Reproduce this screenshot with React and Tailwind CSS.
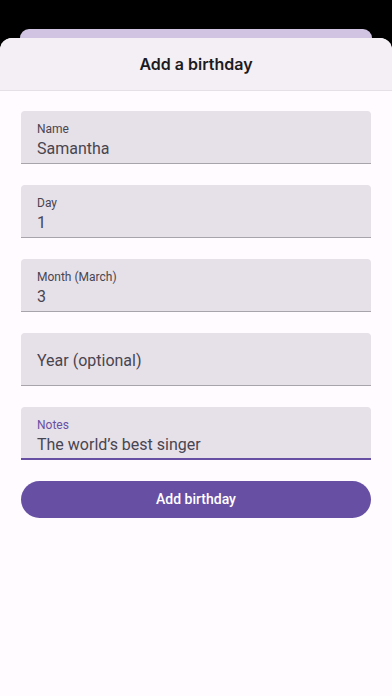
export default function App() {
  const font = { fontFamily: "Roboto, 'Noto Sans', sans-serif" };
  const Field = ({ label, value, focused, placeholder }) => (
    <div
      className={`h-[53px] rounded-t-[4px] bg-[#e6e0e9] px-4 flex flex-col justify-center ${
        focused ? "border-b-2 border-[#6750a4]" : "border-b border-[#a8a4ab]"
      }`}
    >
      {placeholder ? (
        <div className="text-[16px] text-[#49454f] leading-6 pt-[4px]">{placeholder}</div>
      ) : (
        <div className="pt-[8px]">
          <div className={`text-[12px] leading-4 ${focused ? "text-[#6750a4]" : "text-[#49454f]"}`}>{label}</div>
          <div className="text-[16px] leading-6 text-[#49454f]">{value}</div>
        </div>
      )}
    </div>
  );
  return (
    <div className="w-[392px] h-[696px] bg-black flex flex-col overflow-hidden" style={font}>
      <div className="h-[29px] shrink-0" />
      <div className="mx-[20px] h-[9px] shrink-0 rounded-t-[10px] bg-[#d1c4e3]" />
      <div className="flex-1 flex flex-col rounded-t-[12px] overflow-hidden bg-[#fffbfe]">
        <div className="h-[53px] shrink-0 bg-[#f3eff4] border-b border-[#e4e0e6] flex items-center justify-center">
          <span className="text-[16px] font-semibold text-[#1c1b1f]" style={{ fontFamily: "Inter, sans-serif" }}>
            Add a birthday
          </span>
        </div>
        <div className="px-[21px] pt-[20px] flex flex-col gap-[21px]">
          <Field label="Name" value="Samantha" />
          <Field label="Day" value="1" />
          <Field label="Month (March)" value="3" />
          <Field placeholder="Year (optional)" />
          <Field label="Notes" value="The world’s best singer" focused />
          <button className="h-[37px] rounded-full bg-[#6750a4] text-white text-[14px] font-medium">
            Add birthday
          </button>
        </div>
      </div>
    </div>
  );
}
